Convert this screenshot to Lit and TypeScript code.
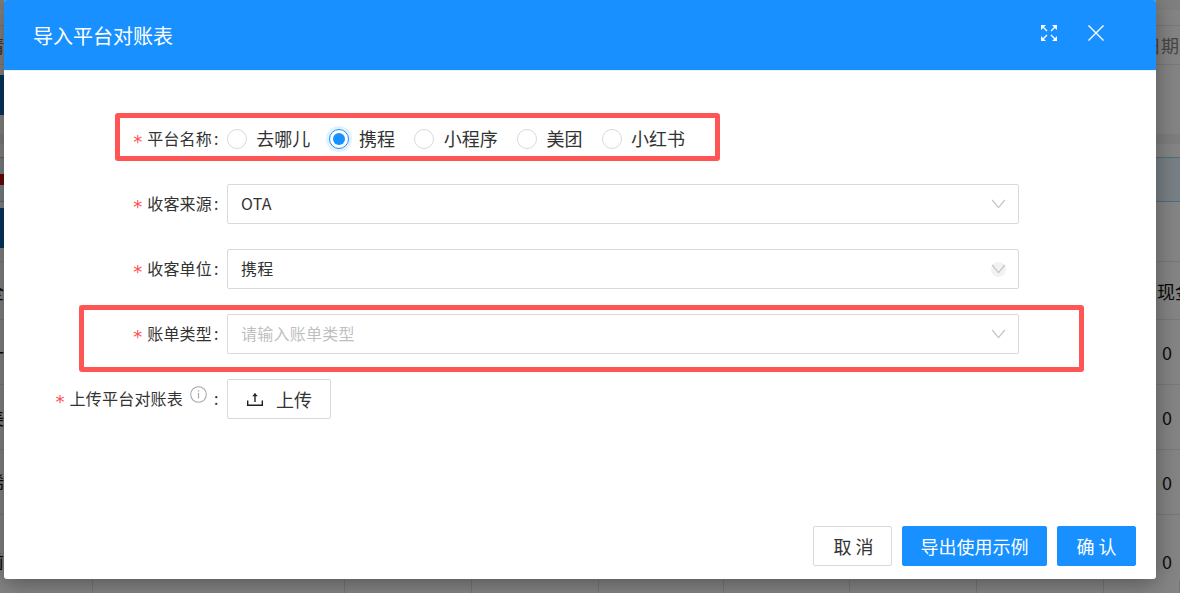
import { LitElement, html, css, svg } from "lit";
import { customElement } from "lit/decorators.js";

const chevron = svg`<svg class="chev" width="15" height="10" viewBox="0 0 15 10" fill="none" stroke="#c4c4c4" stroke-width="1.2"><path d="M1.2 1 L7.5 8.6 L13.8 1"/></svg>`;

@customElement("app-root")
export class AppRoot extends LitElement {
  static styles = css`
    :host { display: block; width: 1180px; height: 593px; position: relative; overflow: hidden;
      font-family: "Noto Sans CJK SC", "Liberation Sans", sans-serif; color: #333; font-size: 16px; background: #fff; }
    * { box-sizing: border-box; }

    .page { display: flex; flex-direction: column; height: 593px; overflow: hidden; color: #111; font-size: 18px; }
    .r { display: grid; grid-template-columns: 4px 1fr 24px; flex: none; border-bottom: 1px solid #e8e8e8; }
    .l { display: flex; justify-content: flex-end; align-items: center; overflow: hidden; white-space: nowrap; }
    .m { min-width: 0; }
    .e { display: flex; align-items: center; overflow: hidden; white-space: nowrap; }
    .plain { border-bottom-color: transparent; }
    .h1 { height: 10px; background: #f6f6f6; border: 0; }
    .h2 { height: 16px; }
    .h3 { height: 39px; }
    .h3 .e { color: #888; font-size: 18px; }
    .h3 .e span { margin-left: -13px; }
    .h3 .l { color: #666; font-size: 18px; }
    .h4 { height: 69px; }
    .h4 .l { align-items: flex-start; padding-top: 10px; }
    .blue { background: #0f66b8; flex: none; width: 4px; height: 40px; }
    .h5 { height: 10px; background: #f2f2f2; border: 0; }
    .h6 { height: 13px; }
    .alert { height: 45px; background: #e9f6ff; border-top: 1px solid #91d5ff; border-bottom: 1px solid #91d5ff; }
    .red { background: #c8100f; flex: none; width: 4px; height: 11px; }
    .h7 { height: 60px; }
    .h7 .l { align-items: flex-start; padding-top: 6px; }
    .thead { height: 58px; }
    .thead .e span { margin-left: -17px; }
    .tr { height: 65px; }
    .tr .e { padding-left: 6px; color: #1a1a1a; }
    .last { height: 92px; border: 0; }
    .last .e { padding-left: 6px; color: #1a1a1a; }
    .cols { position: absolute; left: 0; right: 0; top: 580px; height: 13px; display: grid;
      grid-template-columns: 93px 252px 127px 127px 125px 126px 127px 127px 76px; }
    .cols i { border-right: 1px solid #e2e2e2; }

    .mask { position: absolute; inset: 0; background: rgba(0, 0, 0, .48); }

    .modal { position: absolute; left: 4px; top: 0; width: 1152px; height: 579px; background: #fff; border-radius: 3px;
      box-shadow: 0 4px 24px rgba(0, 0, 0, .38); display: flex; flex-direction: column; overflow: hidden; }
    .head { height: 71px; flex: none; background: #1890ff; border-bottom: 1px solid #f0f0f0; display: flex; align-items: center;
      padding: 0 52px 0 29px; color: #fff; }
    .title { font-size: 20px; flex: 1; line-height: 30px; margin-top: 2px; }
    .head svg { display: block; }
    .head .acts { display: flex; gap: 31px; margin-top: -5px; }

    .body { flex: 1; padding-top: 48px; display: flex; flex-direction: column; gap: 25px; }
    .row { display: flex; height: 40px; align-items: center; }
    .label { width: 223px; flex: none; display: flex; justify-content: flex-end; align-items: center; padding: 0 8px 2px 0;
      white-space: nowrap; line-height: 24px; letter-spacing: .2px; }
    .star { color: #ff4d4f; margin: 8px 5px 0 0; font-family: "DejaVu Sans", sans-serif; font-size: 18px; font-weight: 400; letter-spacing: 0; display: block; }
    .colon { margin-left: 2px; width: 5px; }
    .tip { margin: -8px 7px 0 7px; display: block; }
    .upcolon { margin-left: 0; }

    .radios { display: flex; gap: 19.1px; align-items: center; font-size: 18px; margin-left: -.25px; }
    .radio { display: flex; align-items: center; gap: 9.6px; line-height: 24px; }
    .radio b { font-weight: 400; display: block; margin-top: -2px; }
    .dot { width: 20px; height: 20px; border-radius: 50%; border: 1px solid #d9d9d9; background: #fff; display: block; }
    .dot.on { border-color: #1890ff; box-shadow: 0 0 0 3px rgba(24, 144, 255, .12); display: flex; align-items: center; justify-content: center; }
    .dot.on::after { content: ""; width: 12px; height: 12px; border-radius: 50%; background: #1890ff; }

    .select { width: 792px; height: 40px; border: 1px solid #d9d9d9; border-radius: 2px; display: flex; align-items: center;
      justify-content: space-between; padding: 0 13px; letter-spacing: .25px; }
    .select > span:first-child { display: block; margin-top: -2px; }
    .ph { color: #bfbfbf; }
    .chevwrap { width: 15px; height: 15px; display: flex; align-items: center; justify-content: center; border-radius: 50%; margin-right: -1px; }
    .chevwrap.hover { background: #f2f2f2; }
    .chev { display: block; }

    .btn { height: 40px; border-radius: 2px; border: 1px solid #d9d9d9; background: #fff; font-size: 18px; color: #333;
      display: flex; align-items: center; justify-content: center; white-space: nowrap; }
    .btn.primary { background: #1890ff; border-color: #1890ff; color: #fff; }
    .upload { width: 104px; gap: 13px; padding-left: 1px; }
    .upload svg { display: block; }

    .foot { flex: none; display: flex; justify-content: flex-end; gap: 10px; padding: 0 20px 13px; }
    .w79 { width: 79px; }
    .w145 { width: 145px; }
    .nudge { padding-left: 2px; }

    .mark { position: absolute; border: 5px solid #ff5555; border-radius: 3px; pointer-events: none; }
    .mark1 { left: 115px; top: 113px; width: 605px; height: 48px; }
    .mark2 { left: 79px; top: 305px; width: 1005px; height: 67px; }
  `;

  private bgRow(cls: string, left: unknown = "", right: unknown = "") {
    return html`<div class="r ${cls}"><div class="l">${left}</div><div class="m"></div><div class="e">${right}</div></div>`;
  }

  private field(label: string, control: unknown) {
    return html`<div class="row"><div class="label"><span class="star">*</span>${label}<span class="colon">:</span></div>${control}</div>`;
  }

  private select(value: string, placeholder = false, hover = false) {
    return html`<div class="select"><span class=${placeholder ? "ph" : ""}>${value}</span><span class="chevwrap ${hover ? "hover" : ""}">${chevron}</span></div>`;
  }

  render() {
    const radios = [["去哪儿", false], ["携程", true], ["小程序", false], ["美团", false], ["小红书", false]] as const;
    return html`
      <div class="page">
        ${this.bgRow("h1 plain")}
        ${this.bgRow("h2")}
        ${this.bgRow("h3", html`<span>请</span>`, html`<span>日期</span>`)}
        ${this.bgRow("h4 plain", html`<span class="blue"></span>`)}
        ${this.bgRow("h5")}
        ${this.bgRow("h6 plain")}
        ${this.bgRow("alert", html`<span class="red"></span>`)}
        ${this.bgRow("h7", html`<span class="blue"></span>`)}
        ${this.bgRow("thead", html`<span>全</span>`, html`<span>表现金</span>`)}
        ${this.bgRow("tr", html`<span>一</span>`, html`<span>0</span>`)}
        ${this.bgRow("tr", html`<span>美</span>`, html`<span>0</span>`)}
        ${this.bgRow("tr", html`<span>稀</span>`, html`<span>0</span>`)}
        ${this.bgRow("last plain", html`<span>前</span>`, html`<span>0</span>`)}
      </div>
      <div class="cols">${[0, 1, 2, 3, 4, 5, 6, 7, 8].map(() => html`<i></i>`)}</div>
      <div class="mask"></div>

      <div class="modal">
        <div class="head">
          <div class="title">导入平台对账表</div>
          <div class="acts">
            <svg width="16" height="16" viewBox="0 0 16 16" fill="#fff" stroke="none">
              <path d="M0 0h5L0 5zM16 0v5L11 0zM0 16v-5l5 5zM16 16h-5l5-5z"/>
              <path d="M2 2l4 4M14 2l-4 4M2 14l4-4M14 14l-4-4" stroke="#fff" stroke-width="1.3" fill="none"/>
            </svg>
            <svg width="16" height="16" viewBox="0 0 16 16" fill="none" stroke="#fff" stroke-width="1.4">
              <path d="M.5.5l15 15M15.500.5l-15 15"/>
            </svg>
          </div>
        </div>
        <div class="body">
          ${this.field("平台名称", html`<div class="radios">${radios.map(([t, on]) => html`<label class="radio"><span class="dot ${on ? "on" : ""}"></span><b>${t}</b></label>`)}</div>`)}
          ${this.field("收客来源", this.select("OTA"))}
          ${this.field("收客单位", this.select("携程", false, true))}
          ${this.field("账单类型", this.select("请输入账单类型", true))}
          <div class="row">
            <div class="label"><span class="star">*</span>上传平台对账表
              <svg class="tip" width="17" height="17" viewBox="0 0 17 17" fill="none" stroke="#a8a8ad" stroke-width="1.1">
                <circle cx="8.500" cy="8.500" r="7.800"/>
                <path d="M8.500 7v5.500" stroke-width="1.200"/>
                <path d="M8.500 4.300v1.300" stroke-width="1.300"/>
              </svg><span class="colon upcolon">:</span></div>
            <div class="btn upload">
              <svg width="16" height="14" viewBox="0 0 16 14" fill="none" stroke="#222" stroke-width="1.400">
                <path d="M.7 8.500v4.800h14.600V8.500"/>
                <path d="M8 10V1.500"/>
                <path d="M5.200 4.200L8 1.200l2.800 3z" fill="#222" stroke="none"/>
              </svg>
              上传
            </div>
          </div>
        </div>
        <div class="foot">
          <div class="btn w79 nudge">取 消</div>
          <div class="btn primary w145">导出使用示例</div>
          <div class="btn primary w79">确 认</div>
        </div>
      </div>

      <div class="mark mark1"></div>
      <div class="mark mark2"></div>
    `;
  }
}
